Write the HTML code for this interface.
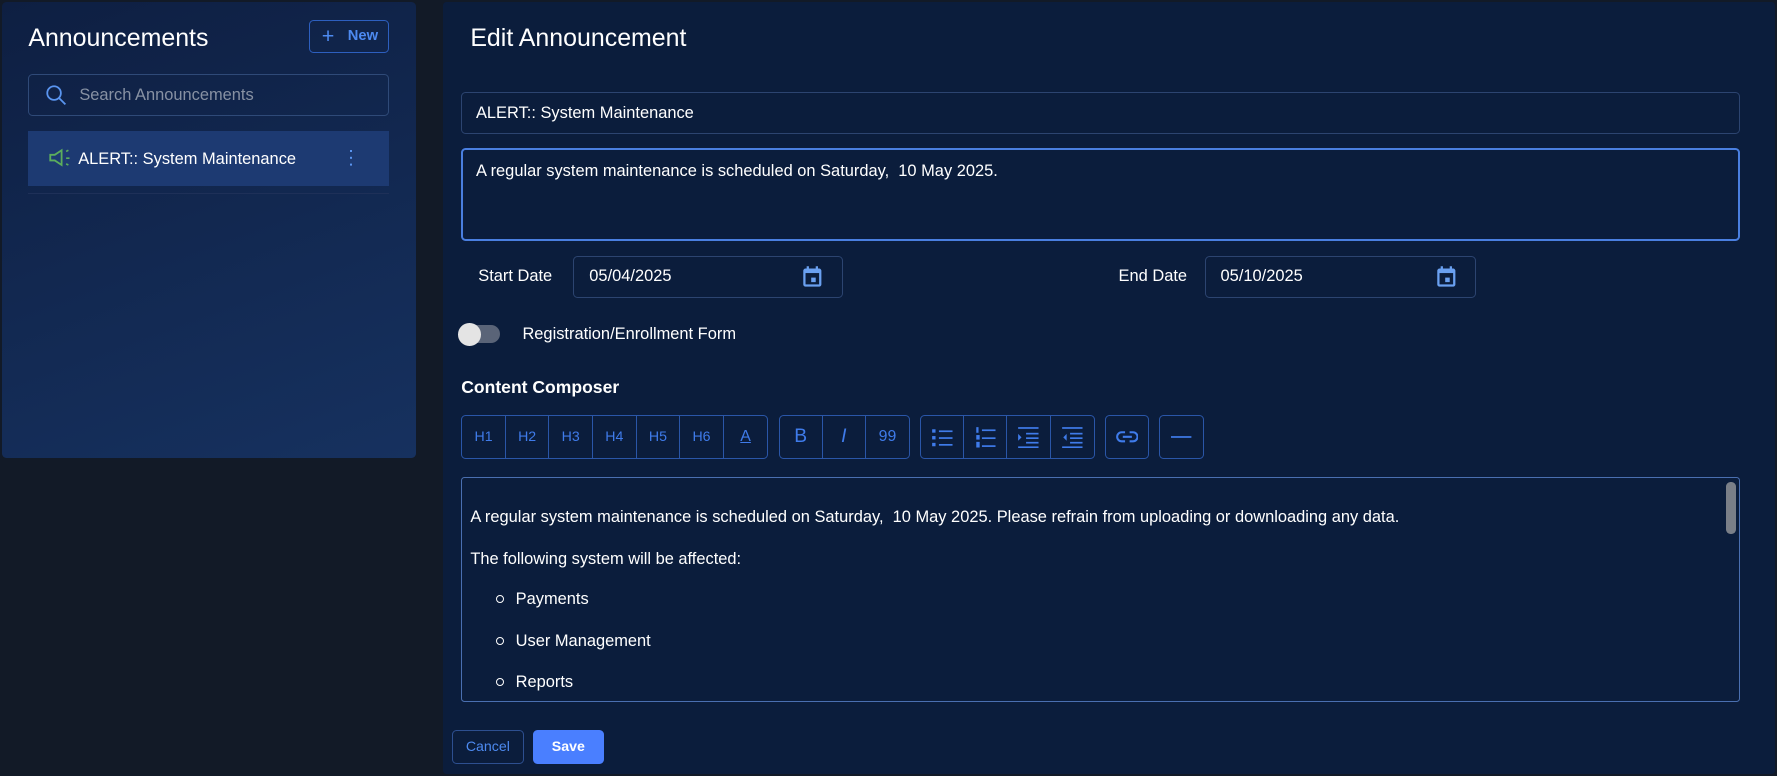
<!DOCTYPE html>
<html><head><meta charset="utf-8"><style>
*{box-sizing:border-box;margin:0;padding:0}
html,body{width:1777px;height:776px;overflow:hidden;background:#121a27;font-family:"Liberation Sans",sans-serif;color:#fff}
#w{zoom:1.13329;position:relative;width:1568px;height:685px}
.a{position:absolute}
.lp{left:2px;top:2px;width:365px;height:402px;border-radius:4px;background:linear-gradient(160deg,#0e1f42,#16315f)}
.rp{left:391px;top:2px;width:1175px;height:681px;background:#0b1d3c;border-radius:3px}
.inp{border:1px solid #2c4470;border-radius:4px}
.t15{font-size:14.5px}
.tb{position:absolute;top:366px;height:39px;border:1px solid #2a56a8;border-radius:4px;display:flex}
.tb div{border-right:1px solid #2a56a8;height:100%;display:flex;align-items:center;justify-content:center;color:#3f7bea;font-size:12.5px}
.tb div:last-child{border-right:none}
.ln{position:absolute;font-size:14.5px;color:#fff}
.bul{position:absolute;left:438px;width:7px;height:7px;border:1.5px solid #fff;border-radius:50%}
</style></head><body><div id="w">
<div class="a lp"></div>
<div class="a" style="left:25px;top:21px;font-size:22px">Announcements</div>
<div class="a" style="left:273px;top:18px;width:70px;height:29px;border:1px solid #2d5fbf;border-radius:4px;color:#4d8af0;font-size:13px;font-weight:bold;line-height:27px"><span style="position:absolute;left:10px;font-size:19px;font-weight:normal">+</span><span style="position:absolute;left:33px">New</span></div>
<div class="a inp" style="left:25px;top:65px;width:318px;height:37px;border-color:#2f4a78"></div>
<svg class="a" style="left:40px;top:74px" width="20" height="20" viewBox="0 0 20 20"><circle cx="8" cy="8" r="6" fill="none" stroke="#5a95f0" stroke-width="1.6"/><path d="M12.5 12.5 L18 18" stroke="#5a95f0" stroke-width="1.6"/></svg>
<div class="a t15" style="left:70px;top:76px;color:#8791a3">Search Announcements</div>
<div class="a" style="left:25px;top:116px;width:318px;height:48px;background:#1d3a72"></div>
<svg class="a" style="left:42px;top:131px" width="22" height="18" viewBox="0 0 22 18"><path d="M2 6h4l6-4v13l-6-4H2z" fill="none" stroke="#5cae5c" stroke-width="1.6"/><path d="M16 3l2-1M16 9h3M16 14l2 1" stroke="#5cae5c" stroke-width="1.4"/></svg>
<div class="a t15" style="left:69px;top:132px">ALERT:: System Maintenance</div>
<div class="a" style="left:309px;top:132px;width:2px;height:2px;background:#5a95f0;box-shadow:0 6px #5a95f0,0 12px #5a95f0"></div>
<div class="a" style="left:25px;top:170px;width:318px;height:1px;background:#1e3058"></div>
<div class="a rp"></div>
<div class="a" style="left:415px;top:21px;font-size:22px">Edit Announcement</div>
<div class="a inp" style="left:407px;top:81px;width:1128px;height:37px"></div>
<div class="a t15" style="left:420px;top:92px">ALERT:: System Maintenance</div>
<div class="a" style="left:407px;top:131px;width:1128px;height:82px;border:2px solid #4a7fe0;border-radius:4px"></div>
<div class="a t15" style="left:420px;top:143px">A regular system maintenance is scheduled on Saturday,&nbsp; 10 May 2025.</div>
<div class="a t15" style="left:422px;top:236px">Start Date</div>
<div class="a inp" style="left:506px;top:226px;width:238px;height:37px"></div>
<div class="a t15" style="left:520px;top:236px">05/04/2025</div>
<div class="a t15" style="left:987px;top:236px">End Date</div>
<div class="a inp" style="left:1063px;top:226px;width:239px;height:37px"></div>
<div class="a t15" style="left:1077px;top:236px">05/10/2025</div>
<svg class="a" style="left:707px;top:233px" width="20" height="22" viewBox="0 0 20 22"><rect x="2" y="4" width="16" height="16" rx="2" fill="#6aa0f0"/><rect x="4" y="8" width="12" height="10" fill="#0b1d3c"/><rect x="9" y="12" width="4" height="4" fill="#6aa0f0"/><path d="M6 2v4M14 2v4" stroke="#6aa0f0" stroke-width="2"/></svg>
<svg class="a" style="left:1266px;top:233px" width="20" height="22" viewBox="0 0 20 22"><rect x="2" y="4" width="16" height="16" rx="2" fill="#6aa0f0"/><rect x="4" y="8" width="12" height="10" fill="#0b1d3c"/><rect x="9" y="12" width="4" height="4" fill="#6aa0f0"/><path d="M6 2v4M14 2v4" stroke="#6aa0f0" stroke-width="2"/></svg>
<div class="a" style="left:405px;top:287px;width:36px;height:16px;border-radius:8px;background:#5a6478"></div>
<div class="a" style="left:404px;top:285px;width:20px;height:20px;border-radius:50%;background:#e4e4e4"></div>
<div class="a t15" style="left:461px;top:287px">Registration/Enrollment Form</div>
<div class="a" style="left:407px;top:333px;font-size:15.5px;font-weight:bold">Content Composer</div>
<div class="tb" style="left:407px;width:271px"><div style="width:38.7px">H1</div><div style="width:38.7px">H2</div><div style="width:38.7px">H3</div><div style="width:38.7px">H4</div><div style="width:38.7px">H5</div><div style="width:38.7px">H6</div><div style="width:38.7px;text-decoration:underline;font-size:14px">A</div></div>
<div class="tb" style="left:687px;width:116px"><div style="width:38.7px;font-size:17px">B</div><div style="width:38.7px;font-size:17px;font-style:italic">I</div><div style="width:38.6px;font-size:14px">99</div></div>
<div class="tb" style="left:812px;width:154px">
<div style="width:38.5px"><svg width="20" height="18" viewBox="0 0 20 18" fill="#3f7bea"><rect x="1" y="2" width="3" height="3"/><rect x="1" y="8" width="3" height="3"/><rect x="1" y="14" width="3" height="3"/><rect x="7" y="3" width="12" height="1.5"/><rect x="7" y="9" width="12" height="1.5"/><rect x="7" y="15" width="12" height="1.5"/></svg></div>
<div style="width:38.5px"><svg width="20" height="20" viewBox="0 0 20 20" fill="#3f7bea"><rect x="2" y="1" width="2" height="5"/><rect x="2" y="8" width="3" height="4"/><rect x="2" y="14" width="3" height="5"/><rect x="7" y="3" width="12" height="1.5"/><rect x="7" y="10" width="12" height="1.5"/><rect x="7" y="17" width="12" height="1.5"/></svg></div>
<div style="width:38.5px"><svg width="20" height="20" viewBox="0 0 20 20" fill="#3f7bea"><rect x="1" y="1" width="18" height="1.5"/><rect x="8" y="6" width="11" height="1.5"/><rect x="8" y="10" width="11" height="1.5"/><rect x="8" y="14" width="11" height="1.5"/><rect x="1" y="18" width="18" height="1.5"/><path d="M1 7l3 3-3 3z"/></svg></div>
<div style="width:38.5px"><svg width="20" height="20" viewBox="0 0 20 20" fill="#3f7bea"><rect x="1" y="1" width="18" height="1.5"/><rect x="8" y="6" width="11" height="1.5"/><rect x="8" y="10" width="11" height="1.5"/><rect x="8" y="14" width="11" height="1.5"/><rect x="1" y="18" width="18" height="1.5"/><path d="M5 7l-3 3 3 3z"/></svg></div></div>
<div class="tb" style="left:975px;width:39px"><div style="width:37px"><svg width="20" height="12" viewBox="0 0 20 12" fill="none" stroke="#3f7bea" stroke-width="1.8"><path d="M8 2H5a4 4 0 0 0 0 8h3M12 2h3a4 4 0 0 1 0 8h-3M6 6h8"/></svg></div></div>
<div class="tb" style="left:1023px;width:39px"><div style="width:37px"><svg width="18" height="4"><rect y="1" width="18" height="1.5" fill="#3f7bea"/></svg></div></div>
<div class="a" style="left:407px;top:421px;width:1128px;height:198px;border:1px solid #4a6fb0;border-radius:3px"></div>
<div class="a" style="left:1523px;top:425px;width:9px;height:46px;border-radius:4px;background:#7a7f88"></div>
<div class="ln" style="left:415px;top:448px">A regular system maintenance is scheduled on Saturday,&nbsp; 10 May 2025. Please refrain from uploading or downloading any data.</div>
<div class="ln" style="left:415px;top:485px">The following system will be affected:</div>
<div class="bul" style="top:525px"></div><div class="ln" style="left:455px;top:521px">Payments</div>
<div class="bul" style="top:562px"></div><div class="ln" style="left:455px;top:558px">User Management</div>
<div class="bul" style="top:598px"></div><div class="ln" style="left:455px;top:594px">Reports</div>
<div class="a" style="left:399px;top:644px;width:63px;height:30px;border:1px solid #2d4f90;border-radius:4px;color:#4d8af0;font-size:12.5px;text-align:center;line-height:29px">Cancel</div>
<div class="a" style="left:470px;top:644px;width:63px;height:30px;background:#4a7fff;border-radius:4px;font-size:12.5px;font-weight:bold;text-align:center;line-height:30px">Save</div>
</div></body></html>
